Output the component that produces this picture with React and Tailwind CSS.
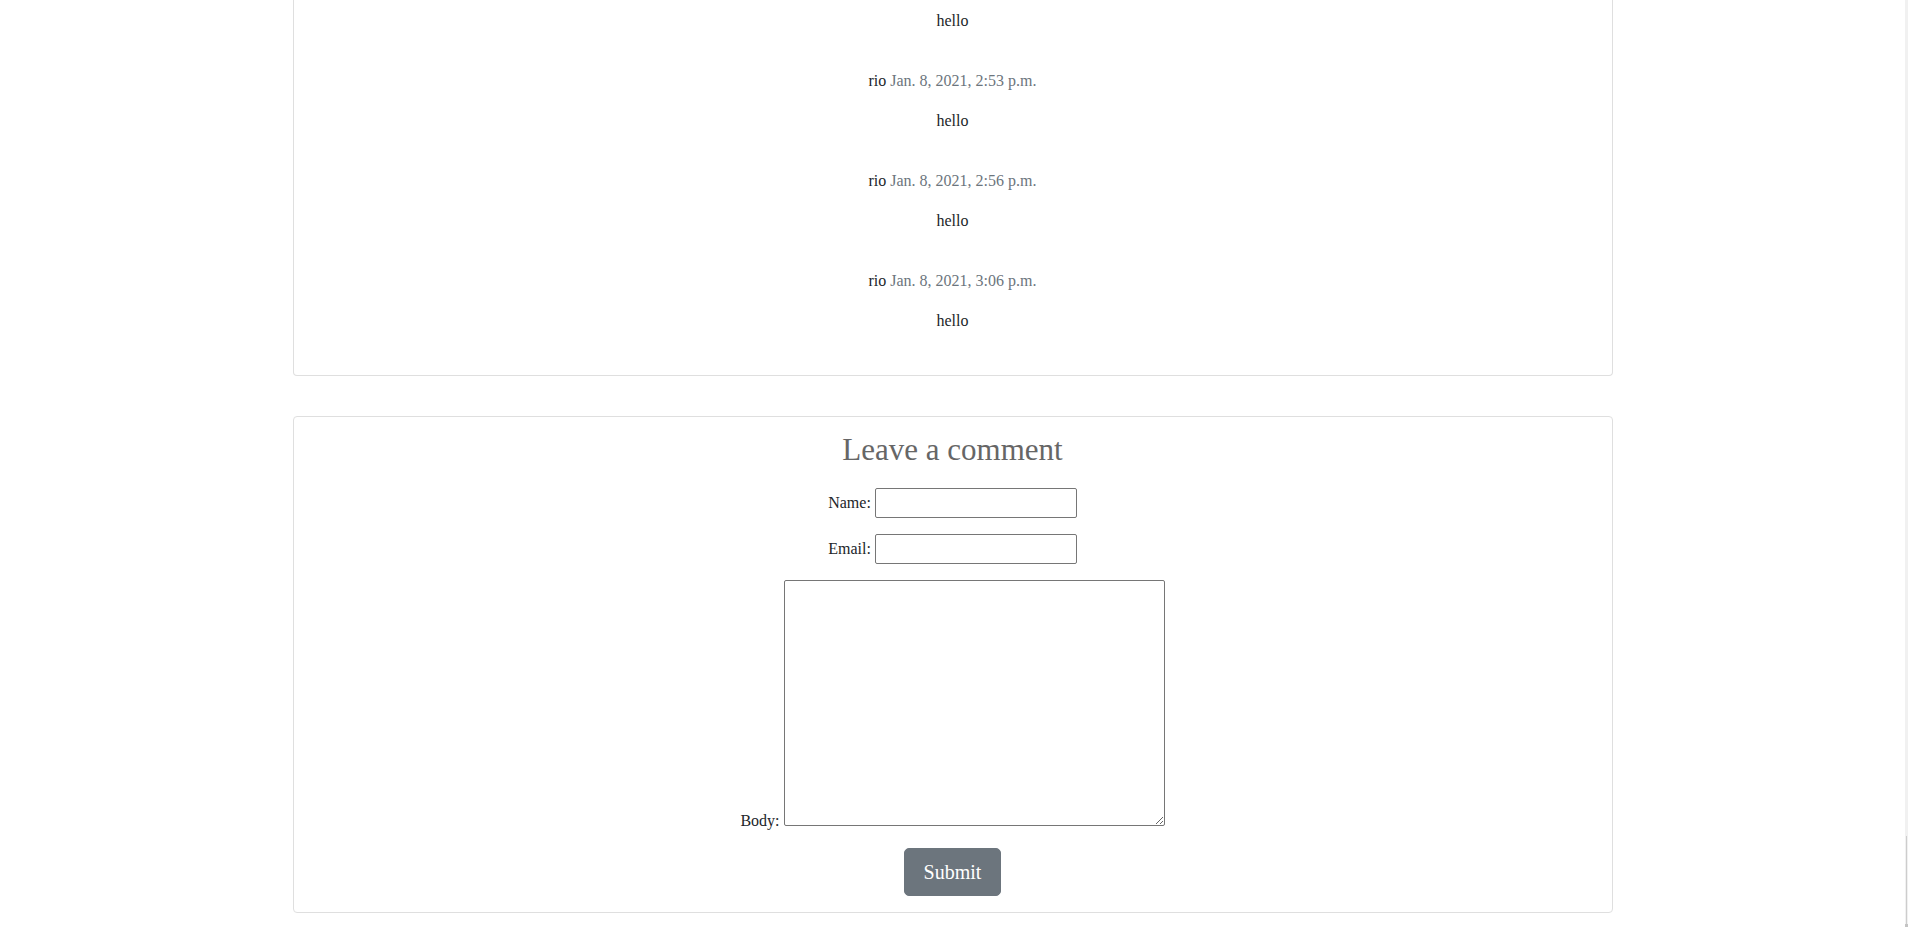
import React from "react";

const comments = [
  "Jan. 8, 2021, 2:53 p.m.",
  "Jan. 8, 2021, 2:56 p.m.",
  "Jan. 8, 2021, 3:06 p.m.",
];

export default function App() {
  return (
    <div className="flex min-h-screen bg-white font-['Liberation_Serif',serif] text-[16px] leading-6 text-[#212529]">
      <main className="flex-1">
        <div className="mx-auto w-[1320px] pb-[15px]">
          {/* comments card (scrolled: top is above the viewport) */}
          <div className="rounded-b-[4px] border border-t-0 border-[#dfdfdf] px-4 pb-4 text-center">
            <div className="pt-[9px] pb-[10px]">
              <p className="mb-4">hello</p>
            </div>
            {comments.map((d) => (
              <div key={d} className="p-[10px]">
                <p className="mb-4">
                  rio <span className="text-[#6c757d]">{d}</span>
                </p>
                <p className="mb-4">hello</p>
              </div>
            ))}
          </div>

          {/* comment form card */}
          <div className="mt-10 rounded-[4px] border border-[#dfdfdf] p-4 text-center">
            <h3 className="mb-[21px] text-[31px] leading-[34px] font-normal text-[#666666]">
              Leave a comment
            </h3>
            <form className="flex flex-col items-center">
              <div className="mb-4 flex h-[30px] items-center justify-center gap-[4px]">
                <label htmlFor="name">Name:</label>
                <input
                  id="name"
                  type="text"
                  className="h-[30px] w-[202px] rounded-[2px] border border-[#767676] px-[2px] font-['Liberation_Serif',serif]"
                />
              </div>
              <div className="mb-4 flex h-[30px] items-center justify-center gap-[4px]">
                <label htmlFor="email">Email:</label>
                <input
                  id="email"
                  type="email"
                  className="h-[30px] w-[202px] rounded-[2px] border border-[#767676] px-[2px] font-['Liberation_Serif',serif]"
                />
              </div>
              <div className="flex items-end justify-center gap-[4px]">
                <label htmlFor="body" className="mb-[-3px] leading-4">
                  Body:
                </label>
                <textarea
                  id="body"
                  className="h-[246px] w-[381px] rounded-[2px] border border-[#767676] px-[2px] font-['Liberation_Serif',serif]"
                />
              </div>
              <button
                type="button"
                className="mt-[22px] rounded-[5px] border border-[#6c757d] bg-[#6c757d] px-[19px] py-2 text-[20px] leading-[30px] text-white"
              >
                Submit
              </button>
            </form>
          </div>
        </div>
      </main>
      <div className="flex w-[3px] flex-col bg-[#f1f1f1]">
        <div className="flex-1" />
        <div className="flex h-[88px] justify-end">
          <div className="w-[1px] bg-[#cdcdcd]" />
          <div className="w-[1px]" />
        </div>
        <div className="h-[4px] bg-[#c4c4c4]" />
      </div>
    </div>
  );
}
